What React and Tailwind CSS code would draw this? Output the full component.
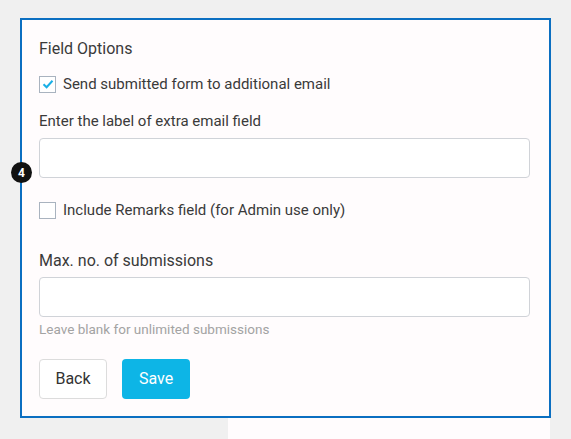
import React, { useState } from "react";

const font = { fontFamily: "Roboto, 'Liberation Sans', sans-serif" };

const Checkbox = ({ checked, onChange, label }) => (
  <label className="flex items-center h-5 cursor-pointer select-none">
    <span
      onClick={onChange}
      className="w-[17px] h-[17px] border border-[#a9b3bf] bg-white flex items-center justify-center shrink-0"
    >
      {checked && (
        <svg width="12" height="10" viewBox="0 0 12 10">
          <path d="M1.5 5.2 L4.6 8.2 L10.5 1.8" fill="none" stroke="#19afe6" strokeWidth="2" />
        </svg>
      )}
    </span>
    <span className="ml-[7px] text-[15px] text-[#3a3a3a]">{label}</span>
  </label>
);

const App = () => {
  const [sendCopy, setSendCopy] = useState(true);
  const [remarks, setRemarks] = useState(false);

  return (
    <div className="bg-[#f0f0f0] min-h-[439px] w-full overflow-hidden" style={font}>
      <div className="pt-[18px] pl-5">
        <div className="relative w-[531px] h-[400px] border-2 border-[#0b6fc1] bg-[#fffcfd] pt-[19px] pl-[17px] pr-[19px]">
          <div className="absolute left-[-11px] top-[142px] w-[21px] h-[21px] rounded-full bg-[#111] text-white text-[12px] font-bold flex items-center justify-center">
            4
          </div>

          <div className="h-5 leading-5 text-[16px] text-[#3a3a3a]">Field Options</div>

          <div className="mt-[15px]">
            <Checkbox
              checked={sendCopy}
              onChange={() => setSendCopy(!sendCopy)}
              label="Send submitted form to additional email"
            />
          </div>

          <div className="mt-[17px] h-5 leading-5 text-[15px] text-[#3a3a3a]">
            Enter the label of extra email field
          </div>
          <input className="mt-[7px] block w-[491px] h-10 border border-[#d0d3d8] rounded bg-white px-3 outline-none" />

          <div className="mt-[22px]">
            <Checkbox
              checked={remarks}
              onChange={() => setRemarks(!remarks)}
              label="Include Remarks field (for Admin use only)"
            />
          </div>

          <div className="mt-[30px] h-[22px] leading-[22px] text-[16px] text-[#3a3a3a]">
            Max. no. of submissions
          </div>
          <input className="mt-[5px] block w-[491px] h-10 border border-[#d0d3d8] rounded bg-white px-3 outline-none" />
          <div className="mt-[3px] h-[18px] leading-[18px] text-[13.5px] text-[#a3a3a3]">
            Leave blank for unlimited submissions
          </div>

          <div className="mt-[21px] flex gap-[15px]">
            <button className="w-[68px] h-10 border border-[#dcdcdc] rounded bg-white text-[16px] text-[#333]">
              Back
            </button>
            <button className="w-[68px] h-10 rounded bg-[#0db5e6] text-[16px] text-white">
              Save
            </button>
          </div>
        </div>
      </div>
      <div className="ml-[228px] w-[322px] h-[21px] bg-[#fffcfd]" />
    </div>
  );
};

export default App;
